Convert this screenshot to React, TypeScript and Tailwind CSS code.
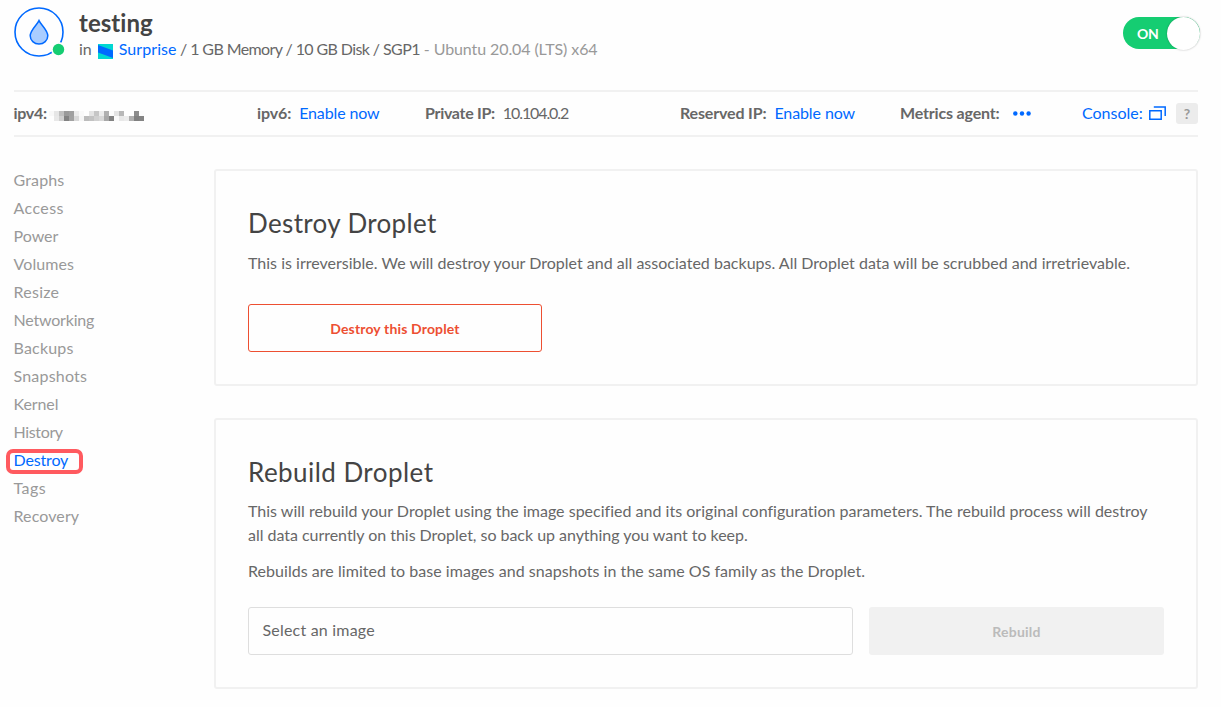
import React from "react";

const navItems = [
  { label: "Graphs", tracking: "tracking-[0.15px]" },
  { label: "Access", tracking: "tracking-[0.4px]" },
  { label: "Power", tracking: "tracking-[0px]" },
  { label: "Volumes", tracking: "tracking-[0.1px]" },
  { label: "Resize", tracking: "tracking-[0.25px]" },
  { label: "Networking", tracking: "tracking-[-0.2px]" },
  { label: "Backups", tracking: "tracking-[0.2px]" },
  { label: "Snapshots", tracking: "tracking-[0.2px]" },
  { label: "Kernel", tracking: "tracking-[-0.1px]" },
  { label: "History", tracking: "tracking-[-0.35px]" },
  { label: "Destroy", tracking: "tracking-[-0.1px]" },
  { label: "Tags", tracking: "tracking-[0.45px]" },
  { label: "Recovery", tracking: "tracking-[0.1px]" },
];

const maskTop = ["#f8f8f8", "#e6e6e6", "#c0c0c0", "#9a9a9a", "#a0a0a0", "#ececec", "#f9f9f9", "#fefefe", "#e4e4e4", "#c6c6c6", "#ececec", "#b0b0b0", "#fcfcfc", "#e4e4e4", "#b8b8b8", "#fefefe", "#fefefe", "#8c8c8c", "#fcfcfc"];
const maskBottom = ["#fefefe", "#e8e8e8", "#d0d0d0", "#828282", "#a2a2a2", "#d8d8d8", "#f6f6f6", "#bcbcbc", "#c2c2c2", "#d0d0d0", "#d8d8d8", "#a8a8a8", "#828282", "#fafafa", "#e8e8e8", "#ececec", "#b0b0b0", "#808080", "#848484"];

function DropletAvatar() {
  return (
    <svg width="54" height="52" viewBox="0 0 54 52" className="-ml-px block shrink-0">
      <circle cx="26" cy="26" r="24" fill="none" stroke="#0069ff" strokeWidth="1.6" />
      <path d="M26 14.6C24 19 17.2 24 17.2 29.8a8.8 8.2 0 0 0 17.6 0C34.8 24 28 19 26 14.6Z" fill="#a9cdff" stroke="#0069ff" strokeWidth="1.5" />
      <circle cx="45.5" cy="43.5" r="7.5" fill="#fefefe" />
      <circle cx="45.5" cy="43.5" r="5.7" fill="#15cd72" />
    </svg>
  );
}

function Mask() {
  return (
    <span className="mt-[6px] ml-[2px] grid grid-cols-[repeat(19,5px)]">
      {[...maskTop, ...maskBottom].map((color, i) => (
        <span key={i} className="h-[5px]" style={{ backgroundColor: color }} />
      ))}
    </span>
  );
}

export default function App() {
  return (
    <div className="h-[707px] w-[1221px] overflow-hidden bg-[#fefefe] pr-[23px] pl-[14px] font-['Lato',sans-serif] text-[16px] text-[#676767]">
      <header className="flex h-[90px] pt-[6px]">
        <DropletAvatar />
        <div className="ml-[12px] flex-1">
          <h1 className="h-[31px] text-[24px] leading-[34px] font-bold tracking-[0.05px] text-[#444444]">testing</h1>
          <div className="flex h-6 items-center whitespace-pre">
            <span>in</span>
            <svg width="15" height="15" viewBox="0 0 15 15" className="mt-[4px] mr-[6px] ml-[6px]">
              <rect width="15" height="15" fill="#00d7d2" />
              <path d="M0 1 15 6.5V14L0 8.5Z" fill="#0069ff" />
            </svg>
            <span className="tracking-[0.06px] text-[#0069ff]">Surprise</span>
            <span className="tracking-[-0.6px]"> / 1 GB Memory / 10 GB Disk / SGP1</span>
            <span className="tracking-[-0.1px] text-[#999999]"> - Ubuntu 20.04 (LTS) x64</span>
          </div>
        </div>
        <button className="mt-[11px] -mr-[2px] flex h-8 w-[77px] items-center justify-between rounded-full bg-[#15cd72] pl-[14px] text-[14px] font-bold tracking-[-0.3px] text-white">
          ON
          <span className="size-[33px] shrink-0 rounded-full bg-white shadow-[0_0_2px_rgba(0,0,0,0.3)]" />
        </button>
      </header>

      <section className="flex h-[47px] items-center border-y-2 border-[#f1f1f1] pb-[2px] whitespace-nowrap">
        <div className="-ml-[0.5px] flex w-[243.5px] items-center tracking-[-0.3px]"><b>ipv4:</b><Mask /></div>
        <div className="flex w-[168px] gap-2 tracking-[-0.13px]"><b>ipv6:</b><span className="text-[#0069ff]">Enable now</span></div>
        <div className="flex w-[255px] gap-2"><b className="tracking-[-0.3px]">Private IP:</b><span className="tracking-[-1.1px]">10.104.0.2</span></div>
        <div className="flex w-[220px] gap-2 tracking-[-0.1px]"><b className="tracking-[-0.16px]">Reserved IP:</b><span className="text-[#0069ff]">Enable now</span></div>
        <div className="flex w-[182px] items-center gap-[13px]">
          <b className="tracking-[-0.17px]">Metrics agent:</b>
          <svg width="18" height="5" viewBox="0 0 18 5" fill="#0069ff" className="mt-[2px]"><circle cx="2.3" cy="2.5" r="2.2" /><circle cx="9" cy="2.5" r="2.2" /><circle cx="15.6" cy="2.5" r="2.2" /></svg>
        </div>
        <div className="flex flex-1 items-center text-[#0069ff]">
          <span>Console:</span>
          <svg width="17" height="14" viewBox="0 0 17 14" className="ml-[6px]" fill="none" stroke="#0069ff" strokeWidth="1.5"><path d="M.8 4.8h11.4v8.4H.8zM4.8 1h11.4v9" /></svg>
          <span className="mt-px ml-auto flex h-[21px] w-[22px] items-center justify-center rounded-[3px] bg-[#ececec] text-[14px] font-bold text-[#999999]">?</span>
        </div>
      </section>

      <div className="flex">
        <nav className="w-[200px] pt-[30px] text-[#999999]">
          {navItems.map(({ label, tracking }) =>
            label === "Destroy" ? (
              <div key={label} className="-ml-2 flex h-7 items-center">
                <span className="flex h-[25px] w-[77px] items-center rounded-[7px] border-4 border-[#ff5a5f] pb-[2px] pl-[3.5px] tracking-[-0.15px] text-[#0069ff]">{label}</span>
              </div>
            ) : (
              <div key={label} className={`-ml-[0.5px] h-7 leading-[26px] ${tracking}`}>{label}</div>
            )
          )}
        </nav>
        <main className="flex-1 pt-8">
          <section className="h-[217px] rounded-[3px] border-2 border-[#f1f1f1] px-8 pt-[32px]">
            <h2 className="h-[48px] text-[26px] leading-[40px] tracking-[0.35px] text-[#444444]">Destroy Droplet</h2>
            <p className="leading-6 tracking-[0.01px] whitespace-nowrap">This is irreversible. We will destroy your Droplet and all associated backups. All Droplet data will be scrubbed and irretrievable.</p>
            <button className="mt-[29px] h-12 w-[294px] rounded-[3px] border border-[#ed4f32] text-[14px] font-bold tracking-[0.15px] text-[#ed4f32]">Destroy this Droplet</button>
          </section>
          <section className="mt-8 h-[271px] rounded-[3px] border-2 border-[#f1f1f1] px-8 pt-[32px]">
            <h2 className="h-[47px] text-[26px] leading-[40px] tracking-[0.45px] text-[#444444]">Rebuild Droplet</h2>
            <p className="leading-6 tracking-[0.015px] whitespace-nowrap">This will rebuild your Droplet using the image specified and its original configuration parameters. The rebuild process will destroy<br /><span className="tracking-[-0.03px]">all data currently on this Droplet, so back up anything you want to keep.</span></p>
            <p className="mt-3 leading-6 tracking-[0.045px]">Rebuilds are limited to base images and snapshots in the same OS family as the Droplet.</p>
            <div className="mt-[24px] flex gap-4">
              <div className="flex h-12 w-[605px] items-center rounded-[3px] border border-[#dedede] pb-[2px] pl-[13.5px] tracking-[0.2px]">Select an image</div>
              <button className="h-12 w-[295px] rounded-[3px] bg-[#f1f1f1] text-[14px] font-bold tracking-[0.25px] text-[#bbbbbb]">Rebuild</button>
            </div>
          </section>
        </main>
      </div>
    </div>
  );
}
